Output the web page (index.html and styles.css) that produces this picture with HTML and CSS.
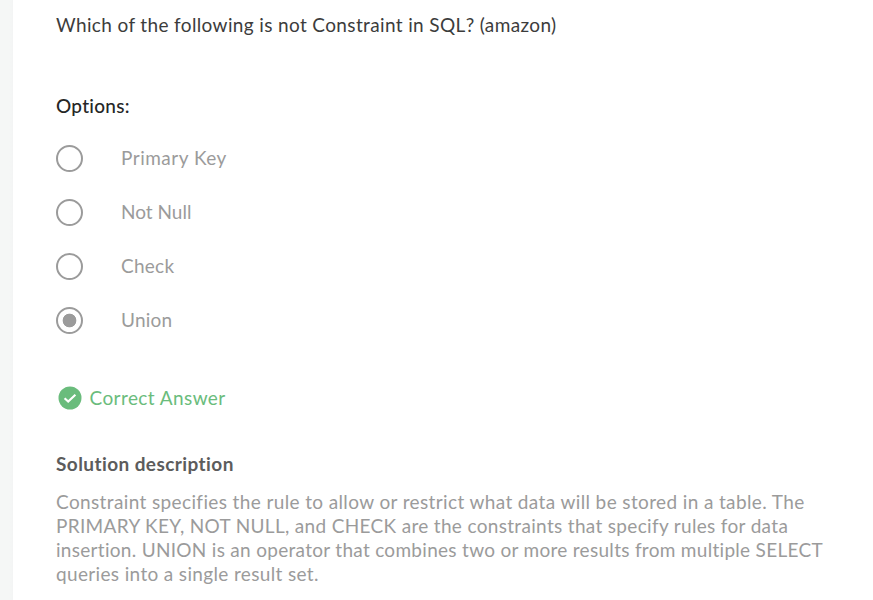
FILE: index.html
```html
<!DOCTYPE html>
<html lang="en">
<head>
<meta charset="utf-8">
<title>SQL quiz</title>
<link rel="stylesheet" href="styles.css">
</head>
<body>
<main class="card">
  <p class="question">Which of the following is not Constraint in SQL? (amazon)</p>
  <h2 class="options-title">Options:</h2>
  <ul class="options">
    <li class="option"><i class="radio"></i><span class="wide">Primary Key</span></li>
    <li class="option"><i class="radio"></i><span>Not Null</span></li>
    <li class="option"><i class="radio"></i><span class="mid">Check</span></li>
    <li class="option"><i class="radio checked"></i><span class="mid">Union</span></li>
  </ul>
  <div class="result">
    <svg class="tick" viewBox="0 0 24 24"><circle cx="12" cy="12" r="11.5" fill="#6abc7c"/><path d="M6.6 12.2l3.6 3.4 7.2-6.8" fill="none" stroke="#fff" stroke-width="2.1"/></svg>
    <span>Correct Answer</span>
  </div>
  <h3 class="solution-title">Solution description</h3>
  <p class="solution">
    <span class="line l1">Constraint specifies the rule to allow or restrict what data will be stored in a table. The</span>
    <span class="line l2">PRIMARY KEY, NOT NULL, and CHECK are the constraints that specify rules for data</span>
    <span class="line l3">insertion. UNION is an operator that combines two or more results from multiple SELECT</span>
    <span class="line l4">queries into a single result set.</span>
  </p>
</main>
</body>
</html>
```

FILE: styles.css
```css
* { box-sizing: border-box; }
body {
  margin: 0;
  height: 600px;
  overflow: hidden;
  padding-left: 13px;
  background: linear-gradient(90deg, #f5f7f6 9px, #f3f4f4 13px);
  font: 19px/24px Lato, "Open Sans", sans-serif;
  color: #9b9b9b;
}
.card { height: 600px; background: #fff; padding: 13px 0 0 43px; }
.question { margin: 0 0 57px; color: #3c3c3c; letter-spacing: .365px; }
.options-title { margin: 0 0 13px; font-size: 19px; font-weight: 500; line-height: 24px; color: #262626; letter-spacing: .26px; }
.options { list-style: none; margin: 0; padding: 0; }
.option { display: flex; align-items: center; height: 54px; gap: 38px; }
.wide { letter-spacing: .5px; }
.mid { letter-spacing: .25px; }
.radio { width: 27px; height: 27px; border: 2px solid #9b9b9b; border-radius: 50%; }
.checked { background: radial-gradient(circle, #9b9b9b 6.5px, transparent 7.2px); }
.result { display: flex; align-items: center; gap: 8px; height: 24px; margin-top: 39px; padding-left: 1.5px; color: #6abc7c; letter-spacing: .42px; }
.tick { width: 24px; height: 24px; }
.solution-title { margin: 42px 0 14px; font-size: 19px; font-weight: 700; line-height: 24px; color: #5c5c5c; letter-spacing: .42px; }
.solution { margin: 0; }
.line { display: block; white-space: nowrap; }
.l1 { letter-spacing: .375px; }
.l2 { letter-spacing: .325px; }
.l3 { letter-spacing: .295px; }
.l4 { letter-spacing: .35px; }
```
